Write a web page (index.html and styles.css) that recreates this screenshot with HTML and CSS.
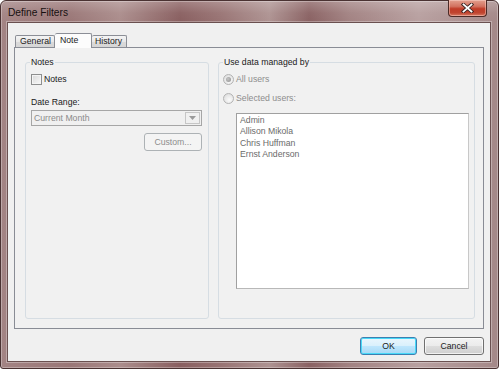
FILE: index.html
```html
<!DOCTYPE html>
<html>
<head>
<meta charset="utf-8">
<link rel="stylesheet" href="styles.css">
</head>
<body>
<div class="window">
  <div class="titlebar">
    <span class="title">Define Filters</span>
    <div class="close">
      <svg width="13" height="10" viewBox="0 0 13 10">
        <path d="M2.5 1.5 L10.5 8.5 M10.5 1.5 L2.5 8.5" stroke="#3b2422" stroke-width="3.6" stroke-linecap="square"/>
        <path d="M2.5 1.5 L10.5 8.5 M10.5 1.5 L2.5 8.5" stroke="#ffffff" stroke-width="1.8" stroke-linecap="square"/>
      </svg>
    </div>
  </div>
  <div class="client">
    <div class="tabs">
      <div class="tab">General</div>
      <div class="tab active">Note</div>
      <div class="tab">History</div>
    </div>
    <div class="panel">
      <fieldset class="group group-left">
        <legend>Notes</legend>
        <label class="check-row"><span class="checkbox"></span><span>Notes</span></label>
        <div class="label">Date Range:</div>
        <div class="combo">
          <span class="combo-text">Current Month</span>
          <span class="combo-btn"><svg width="7" height="4" viewBox="0 0 7 4"><path d="M0 0 H7 L3.5 4 Z" fill="#9a9a9a"/></svg></span>
        </div>
        <div class="btn btn-disabled custom">Custom...</div>
      </fieldset>
      <fieldset class="group group-right">
        <legend>Use data managed by</legend>
        <div class="radio-row"><span class="radio checked"></span><span>All users</span></div>
        <div class="radio-row second"><span class="radio"></span><span>Selected users:</span></div>
        <div class="listbox">
          <div class="item">Admin</div>
          <div class="item">Allison Mikola</div>
          <div class="item">Chris Huffman</div>
          <div class="item">Ernst Anderson</div>
        </div>
      </fieldset>
    </div>
    <div class="buttons">
      <div class="btn btn-default">OK</div>
      <div class="btn">Cancel</div>
    </div>
  </div>
</div>
</body>
</html>
```
FILE: styles.css
```css
* { box-sizing: border-box; }
html, body { margin: 0; padding: 0; background: #ffffff; }
body {
  font-family: "Liberation Sans", Arial, sans-serif;
  font-size: 8.7px;
  color: #1b1b1b;
  width: 500px;
  height: 370px;
  overflow: hidden;
}
.window {
  width: 499px;
  height: 369px;
  border: 1px solid #4a3232;
  border-radius: 6px 6px 3px 3px;
  padding: 0 7px 6px 6px;
  display: flex;
  flex-direction: column;
  background:
    linear-gradient(180deg, rgba(255,255,255,0.22) 0px, rgba(255,255,255,0.04) 12px, rgba(255,255,255,0) 21px),
    linear-gradient(90deg, #a38484 0%, #9a7777 14%, #ab8d8c 24%, #895f60 36%, #987373 44%, #ae9392 54%, #8a6263 62%, #a28282 70%, #b8a0a0 84%, #a48888 100%);
  box-shadow: inset 0 0 0 1px rgba(255,255,255,0.3);
}
.titlebar {
  height: 21px;
  display: flex;
  align-items: center;
  padding-left: 1px;
}
.title {
  font-size: 10.2px;
  color: #161010;
  margin-top: 1px;
}
.close {
  margin-left: auto;
  margin-right: 4px;
  align-self: flex-start;
  margin-top: -1px;
  width: 39px;
  height: 17px;
  border: 1px solid #4c2a26;
  border-top: none;
  border-radius: 0 0 4px 4px;
  background: linear-gradient(180deg, #e3a08f 0%, #d27260 40%, #c03c28 55%, #c0442f 80%, #d77a63 100%);
  display: flex;
  align-items: center;
  justify-content: center;
  box-shadow: inset 0 0 0 1px rgba(255,220,210,0.45);
}
.client {
  flex: 1;
  background: #f0f0f0;
  border: 1px solid #6a5050;
  box-shadow: 0 0 0 1px rgba(255,255,255,0.3);
  padding: 10px 6px 6px 6px;
  display: flex;
  flex-direction: column;
}
.tabs {
  height: 14px;
  display: flex;
  align-items: flex-end;
  padding-left: 1px;
  position: relative;
  z-index: 1;
}
.tab {
  height: 12px;
  border: 1px solid #8b8e96;
  border-bottom: none;
  border-radius: 2px 2px 0 0;
  background: linear-gradient(180deg, #f4f4f4 0%, #e8e8e8 50%, #dadada 51%, #d6d6d6 100%);
  line-height: 11px;
  padding: 0 4px;
  color: #1b1b1b;
}
.tab:first-child { width: 40px; padding-left: 4px; }
.tab:last-child { width: 35px; padding-left: 3px; border-left: none; }
.tab.active {
  height: 15px;
  margin-bottom: -1px;
  width: 37px;
  padding-left: 5px;
  padding-top: 1px;
  background: #fcfcfc;
  border-right: 1px solid #8b8e96;
  border-left: none;
  line-height: 11px;
}
.panel {
  height: 282px;
  border: 1px solid #898c95;
  background: #f1f1f1;
  padding: 9px 8px 9px 10px;
  display: flex;
  gap: 9px;
}
.group {
  margin: 0;
  border: 1px solid #d6dde3;
  border-radius: 3px;
  display: flex;
  flex-direction: column;
  min-width: 0;
}
.group legend {
  padding: 0 1px;
  line-height: 11px;
  color: #1b1b1b;
}
.group-left {
  width: 184px;
  padding: 0 6px 0 5px;
}
.group-left legend { margin-left: -1px; }
.group-right {
  width: 257px;
  padding: 0 5px 0 4px;
}
.check-row {
  margin-top: 6px;
  height: 11px;
  display: flex;
  align-items: center;
  gap: 2px;
  line-height: 11px;
}
.checkbox {
  width: 11px;
  height: 11px;
  border: 1px solid #8e8f8f;
  background: linear-gradient(135deg, #d8d8d8 0%, #ececec 60%, #f8f8f8 100%);
  box-shadow: inset 0 0 0 1px #f4f4f4;
}
.label {
  margin-top: 12px;
  line-height: 11px;
}
.combo {
  margin-top: 2px;
  height: 16px;
  border: 1px solid #a6a6a6;
  background: #f0f0f0;
  display: flex;
  align-items: center;
  padding: 0 1px 0 2px;
}
.combo-text {
  flex: 1;
  color: #8b8b8b;
  line-height: 11px;
}
.combo-btn {
  width: 15px;
  height: 12px;
  border: 1px solid #c6c6c6;
  background: #f0f0f0;
  display: flex;
  align-items: center;
  justify-content: center;
}
.btn {
  height: 18px;
  border: 1px solid #707070;
  border-radius: 3px;
  background: linear-gradient(180deg, #f3f3f3 0%, #ebebeb 50%, #dddddd 51%, #cfcfcf 100%);
  box-shadow: inset 0 0 0 1px rgba(255,255,255,0.7);
  display: flex;
  align-items: center;
  justify-content: center;
  line-height: 11px;
  color: #1b1b1b;
}
.btn-disabled {
  border-color: #adb2b5;
  background: #f4f4f4;
  color: #8d8d8d;
  box-shadow: none;
}
.custom {
  margin-top: 7px;
  width: 58px;
  align-self: flex-end;
}
.radio-row {
  margin-top: 6px;
  height: 11px;
  display: flex;
  align-items: center;
  gap: 2px;
  color: #8d8d8d;
  line-height: 11px;
}
.radio-row.second { margin-top: 8px; }
.radio {
  width: 11px;
  height: 11px;
  border-radius: 50%;
  border: 1px solid #b3b3b3;
  background: radial-gradient(circle at 60% 65%, #fbfbfb 0%, #e6e6e6 60%, #d6d6d6 100%);
  display: flex;
  align-items: center;
  justify-content: center;
}
.radio.checked::after {
  content: "";
  width: 5px;
  height: 5px;
  border-radius: 50%;
  background: radial-gradient(circle at 40% 40%, #c4c4c4 0%, #8e8e8e 100%);
}
.listbox {
  margin-top: 9px;
  margin-left: 13px;
  height: 176px;
  border: 1px solid #a0a0a0;
  border-right-color: #c8c8c8;
  border-bottom-color: #b8b8b8;
  background: #ffffff;
  padding: 1px 3px;
  color: #6b6b6b;
}
.item {
  line-height: 11.3px;
  height: 11.3px;
}
.buttons {
  margin-top: 8px;
  display: flex;
  justify-content: flex-end;
  gap: 7px;
}
.buttons .btn { width: 57px; }
.buttons .btn:last-child { width: 60px; }
.btn-default {
  border-color: #3c7fb1;
  background: linear-gradient(180deg, #eaf6fd 0%, #d9f0fc 50%, #bee6fd 51%, #a7d9f5 100%);
  box-shadow: inset 0 0 0 1px #48d9f8;
}
```
